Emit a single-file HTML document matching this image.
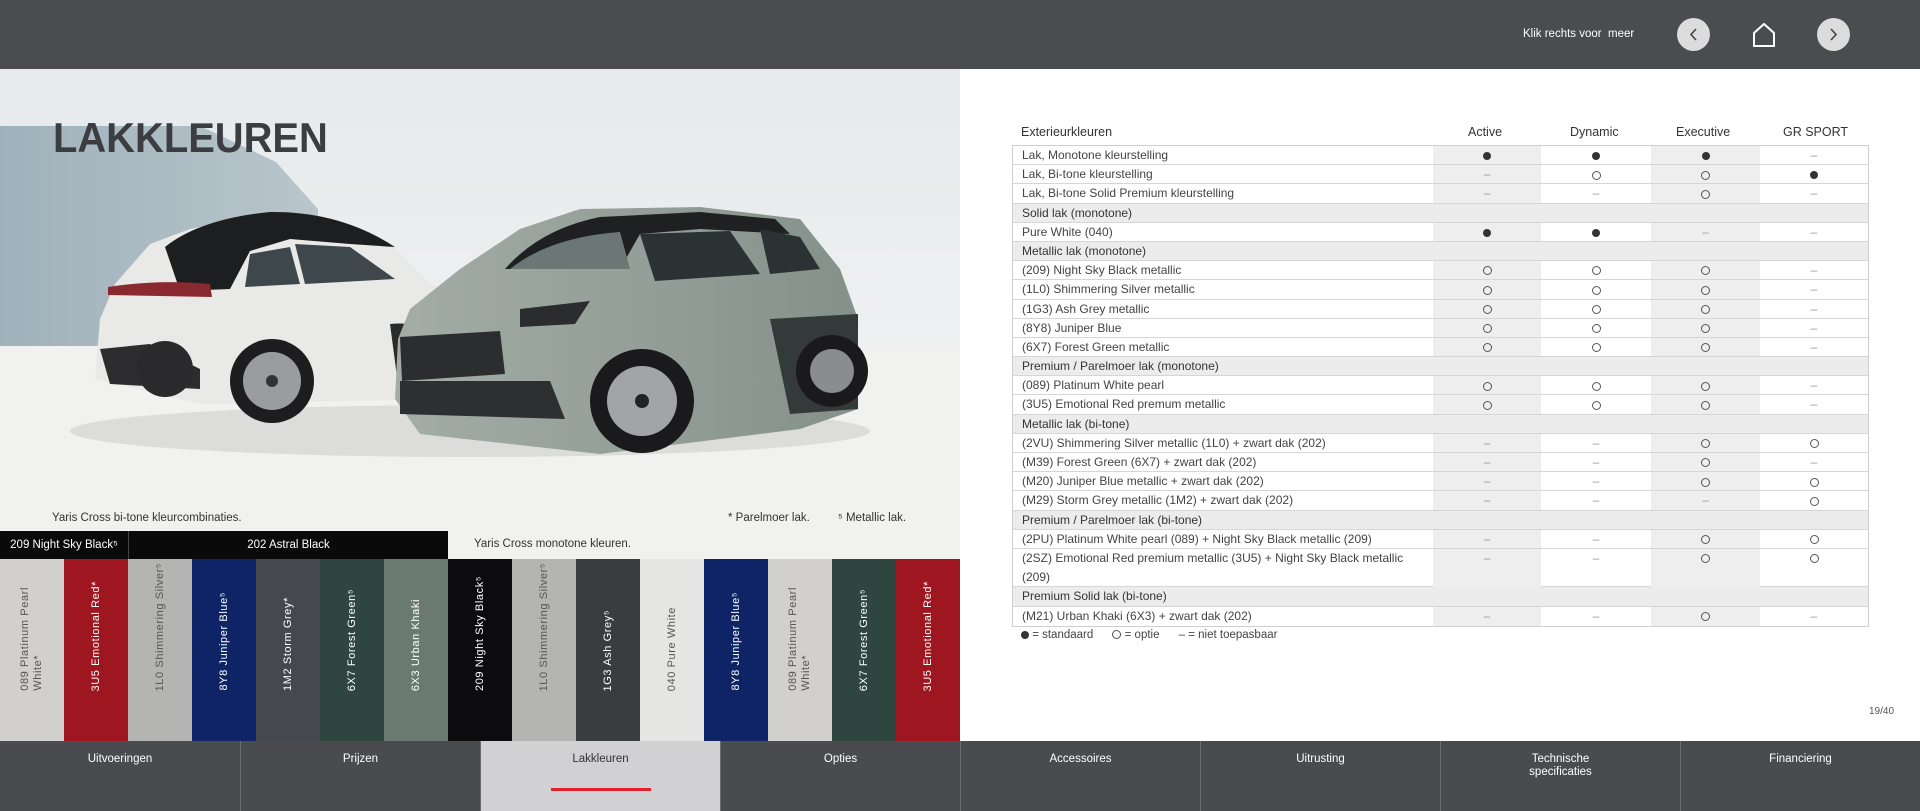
<!DOCTYPE html>
<html><head><meta charset="utf-8"><style>
*{margin:0;padding:0;box-sizing:border-box}
body{width:1920px;height:811px;overflow:hidden;background:#fff;font-family:"Liberation Sans",sans-serif;position:relative}
.top{position:absolute;left:0;top:0;width:1920px;height:69px;background:#4b4c50}
.top .t{position:absolute;left:1523px;top:28px;color:#fff;font-size:11.5px}
.circ{position:absolute;top:18px;width:33px;height:33px;border-radius:50%;background:#dcdcdd}
.left{position:absolute;left:0;top:69px;width:960px;height:672px;background:linear-gradient(#e6eaec 0,#eef0f1 40%,#f4f4f3 60%,#f3f3f2 100%);overflow:hidden}
h1{position:absolute;left:53px;font-size:42px;color:#3c3d41;font-weight:700;transform:scaleX(0.95);transform-origin:0 0}
.cap{position:absolute;font-size:11.5px;color:#333}
.bar{position:absolute;top:531px;height:28px;background:#0a0a0a;color:#fff;font-size:11.5px;line-height:28px;text-align:center}
.stripe{position:absolute;top:559px;width:64px;height:182px;display:flex;justify-content:center;align-items:flex-end;padding-bottom:50px}
.stripe span{writing-mode:vertical-rl;transform:rotate(180deg);white-space:nowrap;font-size:11px;line-height:13px;letter-spacing:0.6px}
.nav{position:absolute;top:741px;height:70px;width:240px;background:#4a4b4f;color:#fff;font-size:11.5px;text-align:center;padding-top:12px;border-left:1px solid #6a6b6f;line-height:13px}
.tbl{position:absolute;left:1012px;top:145px;width:857px;border:1px solid #cfcfcf;font-size:12px;color:#444}
.r{display:grid;grid-template-columns:420px 108px 110px 109px 108px;height:19.2px;border-bottom:1.5px solid #d6d6d6}
.r>div{line-height:18px;text-align:center}
.r>div:first-child{text-align:left;padding-left:9px}
.r>div:nth-child(2),.r>div:nth-child(4){background:#eeeeee}
.s{height:19.2px;background:#ececec;border-bottom:1.5px solid #d6d6d6;padding-left:9px;line-height:18px;color:#333}
.d{display:inline-block;width:8px;height:8px;border-radius:50%;background:#333;vertical-align:middle}
.o{display:inline-block;width:9px;height:9px;border-radius:50%;border:1px solid #555;vertical-align:middle}
.m{color:#999}
.hd{position:absolute;top:125px;font-size:12.5px;color:#333}
</style></head><body>
<div class="top"><div class="t">Klik rechts voor&nbsp; meer</div>
<div class="circ" style="left:1677px"><svg width="33" height="33"><path d="M19 11 L14 16.5 L19 22" stroke="#444" stroke-width="1.6" fill="none"/></svg></div>
<svg style="position:absolute;left:1752px;top:22px" width="24" height="26"><path d="M2 11 L12 2 L22 11 L22 24 L2 24 Z" stroke="#fff" stroke-width="2" fill="none"/></svg>
<div class="circ" style="left:1817px"><svg width="33" height="33"><path d="M14 11 L19 16.5 L14 22" stroke="#444" stroke-width="1.6" fill="none"/></svg></div>
</div>
<div class="left">
<svg width="960" height="672" style="position:absolute;left:0;top:0">
<defs>
<linearGradient id="w" x1="0" x2="1"><stop offset="0" stop-color="#9fb1ba"/><stop offset="1" stop-color="#b9c6cc"/></linearGradient>
<linearGradient id="g" x1="0" x2="1"><stop offset="0" stop-color="#a3ada6"/><stop offset="1" stop-color="#84918a"/></linearGradient>
</defs>
<polygon points="0,57 200,57 276,93 318,140 318,280 0,280" fill="url(#w)"/>
<rect x="0" y="277" width="960" height="395" fill="#f1f1f0"/>
<ellipse cx="470" cy="362" rx="400" ry="26" fill="#dcdcdb"/>
<path d="M95 310 L100 250 L115 215 L150 175 L190 160 L260 145 L330 148 L390 175 L430 215 L470 230 L480 300 L440 330 L200 335 Z" fill="#e9e9e7"/>
<path d="M165 178 Q200 150 270 143 Q340 142 395 178 L350 175 L290 170 L250 182 L230 220 L180 222 Z" fill="#1d1e20"/>
<path d="M295 175 L350 178 L395 210 L305 215 Z" fill="#3e484c"/>
<path d="M250 185 L290 178 L300 215 L245 218 Z" fill="#3e484c"/>
<path d="M108 218 Q160 210 210 215 L212 228 L108 226 Z" fill="#8a2a30"/>
<path d="M100 280 L150 275 L200 300 L200 320 L110 315 Z" fill="#2d2d2f"/>
<path d="M390 255 Q440 250 470 300 L470 330 L400 330 Z" fill="#2a2b2d"/>
<circle cx="272" cy="312" r="42" fill="#1d1d1f"/><circle cx="272" cy="312" r="29" fill="#9a9c9e"/><circle cx="272" cy="312" r="6" fill="#333"/>
<circle cx="165" cy="300" r="28" fill="#2a2a2c"/>
<path d="M395 330 L398 270 L410 240 L460 200 L520 160 L580 140 L700 138 L800 150 L840 200 L858 250 L858 340 L800 360 L600 385 L420 365 Z" fill="url(#g)"/>
<path d="M505 200 Q540 160 600 148 L700 143 L775 150 L790 165 L700 160 L640 165 L620 200 Z" fill="#1e2022"/>
<path d="M510 200 Q550 168 620 163 L630 200 Z" fill="#6b7775"/>
<path d="M640 165 L730 162 L760 205 L655 212 Z" fill="#2a3234"/>
<path d="M760 160 L800 168 L820 200 L770 205 Z" fill="#2a3234"/>
<path d="M400 268 L500 262 L505 305 L402 312 Z" fill="#2b2d2e"/>
<path d="M400 312 L550 312 L565 350 L400 345 Z" fill="#2d2f30"/>
<path d="M520 240 L590 232 L575 255 L520 258 Z" fill="#2a2c2e"/>
<path d="M770 250 L858 245 L858 340 L790 345 Z" fill="#34393a"/>
<circle cx="642" cy="332" r="52" fill="#1a1a1c"/><circle cx="642" cy="332" r="35" fill="#a2a4a6"/><circle cx="642" cy="332" r="7" fill="#222"/>
<circle cx="832" cy="302" r="36" fill="#1a1a1c"/><circle cx="832" cy="302" r="22" fill="#8a8c8e"/>
</svg>
<h1 style="top:45px">LAKKLEUREN</h1>
<div class="cap" style="left:52px;top:443px">Yaris Cross bi-tone kleurcombinaties.</div>
<div class="cap" style="left:728px;top:443px">* Parelmoer lak.</div>
<div class="cap" style="left:838px;top:443px">⁵ Metallic lak.</div>
<div class="cap" style="left:474px;top:469px">Yaris Cross monotone kleuren.</div>
</div>
<div class="bar" style="left:0;width:128px">209 Night Sky Black⁵</div>
<div class="bar" style="left:128px;width:320px;border-left:1px solid #444">202 Astral Black</div>
<div class="stripe" style="left:0;background:#d1d0cc;color:#555"><span>089 Platinum Pearl<br>White*</span></div>
<div class="stripe" style="left:64px;background:#9d1620;color:#fff"><span>3U5 Emotional Red*</span></div>
<div class="stripe" style="left:128px;background:#b4b4b2;color:#555"><span>1L0 Shimmering Silver⁵</span></div>
<div class="stripe" style="left:192px;background:#0e2466;color:#fff"><span>8Y8 Juniper Blue⁵</span></div>
<div class="stripe" style="left:256px;background:#45484d;color:#fff"><span>1M2 Storm Grey*</span></div>
<div class="stripe" style="left:320px;background:#2f4640;color:#fff"><span>6X7 Forest Green⁵</span></div>
<div class="stripe" style="left:384px;background:#6b7a70;color:#fff"><span>6X3 Urban Khaki</span></div>
<div class="stripe" style="left:448px;background:#0c0c0e;color:#fff"><span>209 Night Sky Black⁵</span></div>
<div class="stripe" style="left:512px;background:#b4b4b2;color:#555"><span>1L0 Shimmering Silver⁵</span></div>
<div class="stripe" style="left:576px;background:#3b3c3e;color:#fff"><span>1G3 Ash Grey⁵</span></div>
<div class="stripe" style="left:640px;background:#e5e5e3;color:#555"><span>040 Pure White</span></div>
<div class="stripe" style="left:704px;background:#0e2466;color:#fff"><span>8Y8 Juniper Blue⁵</span></div>
<div class="stripe" style="left:768px;background:#d1d0cc;color:#555"><span>089 Platinum Pearl<br>White*</span></div>
<div class="stripe" style="left:832px;background:#2f4640;color:#fff"><span>6X7 Forest Green⁵</span></div>
<div class="stripe" style="left:896px;background:#9d1620;color:#fff"><span>3U5 Emotional Red*</span></div>

<div class="hd" style="left:1021px">Exterieurkleuren</div>
<div class="hd" style="left:1468px">Active</div>
<div class="hd" style="left:1570px">Dynamic</div>
<div class="hd" style="left:1676px">Executive</div>
<div class="hd" style="left:1783px">GR SPORT</div>
<div class="tbl">
<div class="r"><div>Lak, Monotone kleurstelling</div><div><i class="d"></i></div><div><i class="d"></i></div><div><i class="d"></i></div><div class="m">–</div></div>
<div class="r"><div>Lak, Bi-tone kleurstelling</div><div class="m">–</div><div><i class="o"></i></div><div><i class="o"></i></div><div><i class="d"></i></div></div>
<div class="r"><div>Lak, Bi-tone Solid Premium kleurstelling</div><div class="m">–</div><div class="m">–</div><div><i class="o"></i></div><div class="m">–</div></div>
<div class="s">Solid lak (monotone)</div>
<div class="r"><div>Pure White (040)</div><div><i class="d"></i></div><div><i class="d"></i></div><div class="m">–</div><div class="m">–</div></div>
<div class="s">Metallic lak (monotone)</div>
<div class="r"><div>(209) Night Sky Black metallic</div><div><i class="o"></i></div><div><i class="o"></i></div><div><i class="o"></i></div><div class="m">–</div></div>
<div class="r"><div>(1L0) Shimmering Silver metallic</div><div><i class="o"></i></div><div><i class="o"></i></div><div><i class="o"></i></div><div class="m">–</div></div>
<div class="r"><div>(1G3) Ash Grey metallic</div><div><i class="o"></i></div><div><i class="o"></i></div><div><i class="o"></i></div><div class="m">–</div></div>
<div class="r"><div>(8Y8) Juniper Blue</div><div><i class="o"></i></div><div><i class="o"></i></div><div><i class="o"></i></div><div class="m">–</div></div>
<div class="r"><div>(6X7) Forest Green metallic</div><div><i class="o"></i></div><div><i class="o"></i></div><div><i class="o"></i></div><div class="m">–</div></div>
<div class="s">Premium / Parelmoer lak (monotone)</div>
<div class="r"><div>(089) Platinum White pearl</div><div><i class="o"></i></div><div><i class="o"></i></div><div><i class="o"></i></div><div class="m">–</div></div>
<div class="r"><div>(3U5) Emotional Red premum metallic</div><div><i class="o"></i></div><div><i class="o"></i></div><div><i class="o"></i></div><div class="m">–</div></div>
<div class="s">Metallic lak (bi-tone)</div>
<div class="r"><div>(2VU) Shimmering Silver metallic (1L0) + zwart dak (202)</div><div class="m">–</div><div class="m">–</div><div><i class="o"></i></div><div><i class="o"></i></div></div>
<div class="r"><div>(M39) Forest Green (6X7) + zwart dak (202)</div><div class="m">–</div><div class="m">–</div><div><i class="o"></i></div><div class="m">–</div></div>
<div class="r"><div>(M20) Juniper Blue metallic + zwart dak (202)</div><div class="m">–</div><div class="m">–</div><div><i class="o"></i></div><div><i class="o"></i></div></div>
<div class="r"><div>(M29) Storm Grey metallic (1M2) + zwart dak (202)</div><div class="m">–</div><div class="m">–</div><div class="m">–</div><div><i class="o"></i></div></div>
<div class="s">Premium / Parelmoer lak (bi-tone)</div>
<div class="r"><div>(2PU) Platinum White pearl (089) + Night Sky Black metallic (209)</div><div class="m">–</div><div class="m">–</div><div><i class="o"></i></div><div><i class="o"></i></div></div>
<div class="r" style="height:38.4px"><div style="line-height:19px">(2SZ) Emotional Red premium metallic (3U5) + Night Sky Black metallic (209)</div><div class="m">–</div><div class="m">–</div><div><i class="o"></i></div><div><i class="o"></i></div></div>
<div class="s">Premium Solid lak (bi-tone)</div>
<div class="r" style="border-bottom:none"><div>(M21) Urban Khaki (6X3) + zwart dak (202)</div><div class="m">–</div><div class="m">–</div><div><i class="o"></i></div><div class="m">–</div></div>
</div>
<div style="position:absolute;left:1021px;top:629px;font-size:11.5px;color:#444"><i class="d"></i> = standaard &nbsp;&nbsp;&nbsp;&nbsp;&nbsp;<i class="o"></i> = optie &nbsp;&nbsp;&nbsp;&nbsp; – = niet toepasbaar</div>
<div style="position:absolute;left:1869px;top:706px;font-size:10px;color:#555">19/40</div>

<div class="nav" style="left:0;border-left:none">Uitvoeringen</div>
<div class="nav" style="left:240px">Prijzen</div>
<div class="nav" style="left:480px;background:#d1d1d3;color:#333">Lakkleuren<div style="position:absolute;left:70px;top:47px;width:100px;height:3px;background:#e0202e"></div></div>
<div class="nav" style="left:720px">Opties</div>
<div class="nav" style="left:960px">Accessoires</div>
<div class="nav" style="left:1200px">Uitrusting</div>
<div class="nav" style="left:1440px">Technische<br>specificaties</div>
<div class="nav" style="left:1680px">Financiering</div>
</body></html>
